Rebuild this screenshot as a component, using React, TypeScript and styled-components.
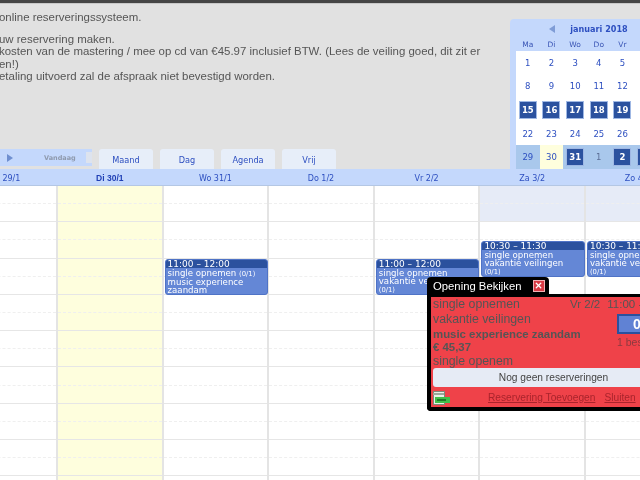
import React from "react";
import styled, { createGlobalStyle } from "styled-components";
import { X } from "lucide-react";

const GlobalStyle = createGlobalStyle`
  html, body {
    margin: 0;
    padding: 0;
    background: #fff;
  }
`;

const verdana = `"DejaVu Sans", Verdana, sans-serif`;
const arial = `"Liberation Sans", Arial, sans-serif`;

const Page = styled.div`
  position: relative;
  width: 640px;
  height: 480px;
  overflow: hidden;
  background: #e1e1e1;
  filter: blur(0.4px);
`;

const TopBar = styled.div`
  height: 3px;
  background: #454545;
  border-bottom: 1px solid #c8c8c8;
`;

const Intro = styled.div`
  display: flex;
  height: 165px;
`;

const IntroLeft = styled.div`
  width: 510px;
  flex-shrink: 0;
  display: flex;
  flex-direction: column;
  justify-content: space-between;
`;

const Notes = styled.div`
  padding-top: 7px;
  margin-left: -1px;
  font: 11.45px/12.6px ${arial};
  color: #555;
  white-space: nowrap;
`;

const NoteGap = styled.div`
  height: 9px;
`;

const Toolbar = styled.div`
  display: flex;
  align-items: flex-start;
  height: 20px;
`;

const DayNav = styled.div`
  display: flex;
  align-items: center;
  width: 92px;
  height: 17px;
  background: #c4d8fc;
  position: relative;
`;

const PlayIcon = styled.span`
  margin-left: 7px;
  width: 0;
  height: 0;
  border-left: 6px solid #6f8fd0;
  border-top: 4px solid transparent;
  border-bottom: 4px solid transparent;
`;

const TodayLabel = styled.span`
  margin-left: 31px;
  font: bold 6.5px ${verdana};
  color: #8f9aae;
`;

const NavNotch = styled.span`
  position: absolute;
  right: 0;
  top: 3px;
  width: 6px;
  height: 11px;
  background: #dde3ee;
`;

const Tabs = styled.div`
  display: flex;
  gap: 7px;
  margin-left: 7px;
`;

const Tab = styled.div`
  width: 54px;
  height: 20px;
  background: #e7eef9;
  border-radius: 3px 3px 0 0;
  display: flex;
  align-items: center;
  justify-content: center;
  padding-top: 2px;
  box-sizing: border-box;
  font: 8.2px ${verdana};
  color: #2d4fc0;
`;

const Calendar = styled.div`
  width: 178px;
  margin-top: 15px;
  flex-shrink: 0;
  background: #c4d8fc;
  border-radius: 4px 0 0 0;
  padding-left: 6px;
  box-sizing: border-box;
  font: 8.5px ${verdana};
  color: #2d4fc0;
`;

const MonthRow = styled.div`
  height: 18px;
  display: flex;
  align-items: center;
  justify-content: center;
  font-weight: bold;
  font-size: 8.1px;
  position: relative;
  padding: 2px 6px 0 0;
  box-sizing: border-box;
`;

const PrevIcon = styled.span`
  position: absolute;
  left: 33px;
  top: 6px;
  width: 0;
  height: 0;
  border-right: 6px solid #7f9cd6;
  border-top: 4px solid transparent;
  border-bottom: 4px solid transparent;
`;

const WeekRow = styled.div`
  display: grid;
  grid-template-columns: repeat(7, 23.67px);
  height: 14px;
  align-items: center;
  text-align: center;
  font-size: 7.5px;
  color: #3a55b5;
`;

const DayGrid = styled.div`
  display: grid;
  grid-template-columns: repeat(7, 23.67px);
  grid-auto-rows: 23.6px;
  background: #fff;
`;

const DayCell = styled.div<{ $outside?: boolean; $today?: boolean; $muted?: boolean }>`
  display: flex;
  align-items: center;
  justify-content: center;
  background: ${({ $outside, $today }) =>
    $today ? "#fefedd" : $outside ? "#a9c8ec" : "#fff"};
  color: ${({ $muted }) => ($muted ? "#5c6f96" : "#2d4fc0")};
`;

const DayBadge = styled.span`
  width: 16px;
  height: 16px;
  display: flex;
  align-items: center;
  justify-content: center;
  background: #2b529f;
  outline: 1px solid #9fb8e4;
  color: #fff;
  font-weight: bold;
`;

const HeaderRow = styled.div`
  display: grid;
  grid-template-columns: repeat(7, 105.6px);
  margin-left: -48.6px;
  height: 17px;
  padding-top: 2px;
  background: #c4d8fc;
  border-bottom: 1px solid #b4c7e4;
  box-sizing: border-box;
  position: relative;
  width: 700px;
`;

const HeaderCell = styled.div<{ $today?: boolean }>`
  display: flex;
  align-items: center;
  justify-content: center;
  font: ${({ $today }) => ($today ? `bold 8.5px ${arial}` : `normal 8px ${verdana}`)};
  color: ${({ $today }) => ($today ? "#1f3fb5" : "#2d4fc0")};
`;

const Body = styled.div`
  display: grid;
  grid-template-columns: repeat(7, 105.6px);
  margin-left: -47.6px;
  width: 700px;
  background: #fff;
`;

const Column = styled.div<{ $today?: boolean }>`
  position: relative;
  height: 300px;
  box-sizing: border-box;
  border-right: 2px solid #e4e4e4;
  background: ${({ $today }) => ($today ? "#fefedd" : "transparent")};
`;

const Slot = styled.div<{ $solid: boolean; $closed: boolean }>`
  height: 18.15px;
  box-sizing: border-box;
  border-bottom: 1px ${({ $solid }) => ($solid ? "solid #e6e6e6" : "dashed #efefef")};
  background: ${({ $closed }) => ($closed ? "#e6ebf7" : "transparent")};
`;

const Event = styled.div<{ $top: number }>`
  position: absolute;
  top: ${({ $top }) => $top}px;
  left: 1px;
  right: -1px;
  height: 36px;
  overflow: hidden;
  box-sizing: border-box;
  background: #6487d6;
  border: 1px solid #4f73c6;
  border-radius: 3px;
  font: 8.6px/8px ${verdana};
  color: #fff;
`;

const EventTime = styled.div`
  background: #2b519e;
  height: 8px;
  line-height: 9px;
  padding-left: 3px;
  margin: -1px -1px 0;
  padding-top: 1px;
  font-size: 9px;
`;

const EventText = styled.div`
  padding: 0 0 0 2px;
  margin-top: 1px;
  white-space: nowrap;

  small {
    font-size: 6.8px;
  }
`;

const Popup = styled.div`
  position: absolute;
  left: 427px;
  top: 277px;
  width: 245px;
`;

const PopupTitle = styled.div`
  width: 122px;
  height: 17px;
  background: #000;
  border-radius: 4px 4px 0 0;
  display: flex;
  align-items: center;
  padding-left: 6px;
  box-sizing: border-box;
  font: 11.3px ${arial};
  color: #fff;
  white-space: nowrap;
`;

const CloseButton = styled.span`
  margin-left: 12px;
  width: 10px;
  height: 10px;
  flex-shrink: 0;
  background: #d83a44;
  outline: 1px solid #f0b0b4;
  display: flex;
  align-items: center;
  justify-content: center;
  color: #fff;
`;

const PopupBody = styled.div`
  background: #ef4249;
  border: solid #000;
  border-width: 3px 0 4px 4px;
  border-radius: 0 0 0 4px;
  padding-left: 2px;
  height: 117px;
  box-sizing: border-box;
  font: 12.3px/15px ${arial};
  color: #555;
  white-space: nowrap;
`;

const PopupMain = styled.div`
  display: grid;
  grid-template-columns: 137px 1fr;
`;

const PopupStrong = styled.div`
  font-weight: bold;
  font-size: 11.4px;
  line-height: 13px;

  &:nth-child(3) {
    padding-top: 1px;
  }
`;

const PopupLine = styled.div``;

const PopupSide = styled.div`
  font-size: 11.5px;
`;

const Times = styled.div`
  display: flex;
  gap: 7px;
`;

const CountBox = styled.div`
  margin: 2px 0 0 47px;
  width: 40px;
  height: 20px;
  box-sizing: border-box;
  background: #6082d4;
  border: 2px solid #2b519e;
  display: flex;
  align-items: center;
  justify-content: center;
  font: bold 14px ${arial};
  color: #fff;
`;

const CountLabel = styled.div`
  margin: 2px 0 0 47px;
  font-size: 10.5px;
  line-height: 13px;
  color: #8c3a40;
`;

const EmptyBar = styled.div`
  height: 19px;
  width: 241px;
  margin-top: -1px;
  background: #e6ebf5;
  border-radius: 3px;
  display: flex;
  align-items: center;
  justify-content: center;
  font: 10.2px ${arial};
  color: #444;
`;

const PopupFooter = styled.div`
  display: flex;
  align-items: center;
  gap: 9px;
  height: 21px;
  font-size: 10.2px;
`;

const FooterLink = styled.a`
  color: #a9242c;
  text-decoration: underline;
`;

const TicketIcon = styled.svg`
  width: 17px;
  height: 14px;
  margin-right: 29px;
  flex-shrink: 0;
`;

const notes = [
  "online reserveringssysteem.",
  null,
  "uw reservering maken.",
  "kosten van de mastering / mee op cd van €45.97 inclusief BTW. (Lees de veiling goed, dit zit er",
  "en!)",
  "etaling uitvoerd zal de afspraak niet bevestigd worden.",
];

const tabs = ["Maand", "Dag", "Agenda", "Vrij"];
const weekDays = ["Ma", "Di", "Wo", "Do", "Vr", "Za", "Zo"];
const marked = new Set([15, 16, 17, 18, 19]);

const weeks: number[][] = [
  [1, 2, 3, 4, 5, 0, 0],
  [8, 9, 10, 11, 12, 0, 0],
  [15, 16, 17, 18, 19, 0, 0],
  [22, 23, 24, 25, 26, 0, 0],
];

const columns = [
  { label: "Ma 29/1" },
  { label: "Di 30/1", today: true },
  { label: "Wo 31/1", event: "short" },
  { label: "Do 1/2" },
  { label: "Vr 2/2", event: "long", top: 73 },
  { label: "Za 3/2", closed: true, event: "long", top: 55, time: "10:30 – 11:30" },
  { label: "Zo 4/2", closed: true, event: "long", top: 55, time: "10:30 – 11:30" },
];

const CalendarEvent: React.FC<{ kind: string; top: number; time: string }> = ({ kind, top, time }) => (
  <Event $top={top}>
    <EventTime>{time}</EventTime>
    {kind === "short" ? (
      <EventText>
        single opnemen <small>(0/1)</small>
        <br />
        music experience
        <br />
        zaandam
      </EventText>
    ) : (
      <EventText>
        single opnemen
        <br />
        vakantie veilingen
        <br />
        <small>(0/1)</small>
        <br />
        music experience
      </EventText>
    )}
  </Event>
);

const App: React.FC = () => (
  <Page>
    <GlobalStyle />
    <TopBar />
    <Intro>
      <IntroLeft>
        <Notes>
          {notes.map((line, i) => (line ? <div key={i}>{line}</div> : <NoteGap key={i} />))}
        </Notes>
        <Toolbar>
          <DayNav>
            <PlayIcon />
            <TodayLabel>Vandaag</TodayLabel>
            <NavNotch />
          </DayNav>
          <Tabs>
            {tabs.map((tab) => (
              <Tab key={tab}>{tab}</Tab>
            ))}
          </Tabs>
        </Toolbar>
      </IntroLeft>
      <Calendar>
        <MonthRow>
          <PrevIcon />
          januari 2018
        </MonthRow>
        <WeekRow>
          {weekDays.map((d) => (
            <div key={d}>{d}</div>
          ))}
        </WeekRow>
        <DayGrid>
          {weeks.flat().map((day, i) => (
            <DayCell key={i}>{day > 0 && (marked.has(day) ? <DayBadge>{day}</DayBadge> : day)}</DayCell>
          ))}
          <DayCell $outside>29</DayCell>
          <DayCell $today>30</DayCell>
          <DayCell $outside>
            <DayBadge>31</DayBadge>
          </DayCell>
          <DayCell $outside $muted>
            1
          </DayCell>
          <DayCell $outside>
            <DayBadge>2</DayBadge>
          </DayCell>
          <DayCell $outside>
            <DayBadge>3</DayBadge>
          </DayCell>
          <DayCell $outside>
            <DayBadge>4</DayBadge>
          </DayCell>
        </DayGrid>
      </Calendar>
    </Intro>
    <HeaderRow>
      {columns.map((c) => (
        <HeaderCell key={c.label} $today={c.today}>
          {c.label}
        </HeaderCell>
      ))}
    </HeaderRow>
    <Body>
      {columns.map((c) => (
        <Column key={c.label} $today={c.today}>
          {Array.from({ length: 17 }, (_, i) => (
            <Slot key={i} $solid={i % 2 === 1} $closed={!!c.closed && i < 2} />
          ))}
          {c.event && (
            <CalendarEvent kind={c.event} top={c.top ?? 73} time={c.time ?? "11:00 – 12:00"} />
          )}
        </Column>
      ))}
    </Body>
    <Popup>
      <PopupTitle>
        Opening Bekijken
        <CloseButton>
          <X size={9} strokeWidth={3.5} />
        </CloseButton>
      </PopupTitle>
      <PopupBody>
        <PopupMain>
          <div>
            <PopupLine>single opnemen</PopupLine>
            <PopupLine>vakantie veilingen</PopupLine>
            <PopupStrong>music experience zaandam</PopupStrong>
            <PopupStrong>€ 45,37</PopupStrong>
            <PopupLine>single openem</PopupLine>
          </div>
          <PopupSide>
            <Times>
              <span>Vr 2/2</span>
              <span>11:00 - 12:00</span>
            </Times>
            <CountBox>0</CountBox>
            <CountLabel>1 beschikbaar</CountLabel>
          </PopupSide>
        </PopupMain>
        <EmptyBar>Nog geen reserveringen</EmptyBar>
        <PopupFooter>
          <TicketIcon viewBox="0 0 17 14">
            <rect x="0.5" y="0.5" width="11" height="13" fill="#e8efe8" stroke="#7a8a7a" />
            <rect x="0" y="2" width="11" height="2" fill="#9aa89a" />
            <rect x="2" y="6" width="15" height="6" fill="#3fbf4a" />
            <rect x="4" y="8" width="9" height="2" fill="#1e7a2a" />
          </TicketIcon>
          <FooterLink>Reservering Toevoegen</FooterLink>
          <FooterLink>Sluiten</FooterLink>
        </PopupFooter>
      </PopupBody>
    </Popup>
  </Page>
);

export default App;
